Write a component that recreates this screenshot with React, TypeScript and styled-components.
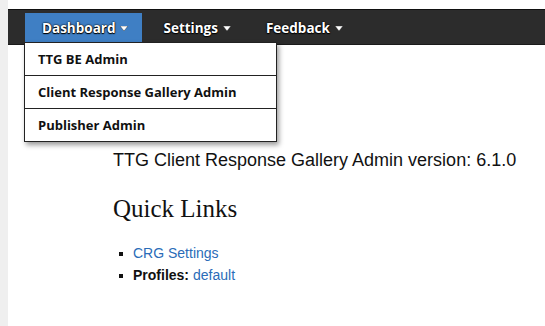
import React from "react";
import styled, { createGlobalStyle } from "styled-components";

const GlobalStyle = createGlobalStyle`
  html, body { margin: 0; padding: 0; }
  body { background: #efefef; font-family: "Liberation Sans", Arial, sans-serif; }
`;

const Page = styled.div`
  margin-left: 8px;
  background: #ffffff;
  min-height: 326px;
  padding-top: 9px;
  box-sizing: border-box;
`;

const NavBar = styled.nav`
  height: 36px;
  box-sizing: border-box;
  background: #2c2c2c;
  border-top: 1px solid #111;
  border-bottom: 1px solid #1a1a1a;
  display: flex;
  align-items: flex-start;
  padding: 3px 0 0 17px;
  gap: 4px;
`;

const NavItem = styled.div<{ $active?: boolean }>`
  position: relative;
  height: 29px;
  display: flex;
  align-items: center;
  gap: 5px;
  padding: 0 14px 0 17px;
  background: ${(p) => (p.$active ? "#3f7fc4" : "transparent")};
  color: #fff;
  font-family: "Open Sans", "DejaVu Sans", sans-serif;
  font-weight: 700;
  font-size: 13.5px;
  text-shadow: 0 0 2px #000, 0 1px 1px #000, 0 0 1px #000;
`;

const Caret = () => (
  <svg width="8" height="5" viewBox="0 0 8 5" style={{ marginTop: 1 }}>
    <path d="M0 0 L8 0 L4 5 Z" fill="#fff" stroke="#222" strokeWidth="0.4" />
  </svg>
);

const Dropdown = styled.div`
  position: absolute;
  top: 100%;
  left: -1px;
  width: 253px;
  box-sizing: border-box;
  background: #fff;
  border: 1px solid #222;
  box-shadow: 2px 3px 5px rgba(0, 0, 0, 0.4);
  z-index: 10;
`;

const DropItem = styled.div`
  height: 33px;
  box-sizing: border-box;
  display: flex;
  align-items: center;
  padding-left: 13px;
  border-bottom: 1px solid #222;
  color: #111;
  font-family: "Open Sans", "DejaVu Sans", sans-serif;
  font-weight: 700;
  font-size: 13px;
  text-shadow: none;
  &:last-child { border-bottom: none; height: 32px; }
`;

const Content = styled.main`
  padding: 105px 0 0 105px;
`;

const Version = styled.div`
  font-size: 18px;
  line-height: 21px;
  color: #111;
`;

const Heading = styled.h2`
  margin: 23px 0 0;
  font-family: "Liberation Serif", "Times New Roman", serif;
  font-weight: 400;
  font-size: 25px;
  line-height: 29px;
  color: #111;
`;

const LinkList = styled.ul`
  list-style: none;
  margin: 19px 0 0;
  padding: 0;
`;

const LinkItem = styled.li`
  display: flex;
  align-items: center;
  font-size: 14px;
  line-height: 22px;
  color: #111;
  &::before {
    content: "";
    width: 4px;
    height: 4px;
    background: #111;
    margin: 1px 10px 0 6px;
  }
`;

const A = styled.a`
  color: #2a6cb8;
  text-decoration: none;
`;

const Strong = styled.b`
  font-weight: 700;
  margin-right: 4px;
`;

export default function App() {
  return (
    <>
      <GlobalStyle />
      <Page>
        <NavBar>
          <NavItem $active>
            Dashboard <Caret />
            <Dropdown>
              <DropItem>TTG BE Admin</DropItem>
              <DropItem>Client Response Gallery Admin</DropItem>
              <DropItem>Publisher Admin</DropItem>
            </Dropdown>
          </NavItem>
          <NavItem>
            Settings <Caret />
          </NavItem>
          <NavItem>
            Feedback <Caret />
          </NavItem>
        </NavBar>
        <Content>
          <Version>TTG Client Response Gallery Admin version: 6.1.0</Version>
          <Heading>Quick Links</Heading>
          <LinkList>
            <LinkItem>
              <A href="#">CRG Settings</A>
            </LinkItem>
            <LinkItem>
              <Strong>Profiles:</Strong>
              <A href="#">default</A>
            </LinkItem>
          </LinkList>
        </Content>
      </Page>
    </>
  );
}
